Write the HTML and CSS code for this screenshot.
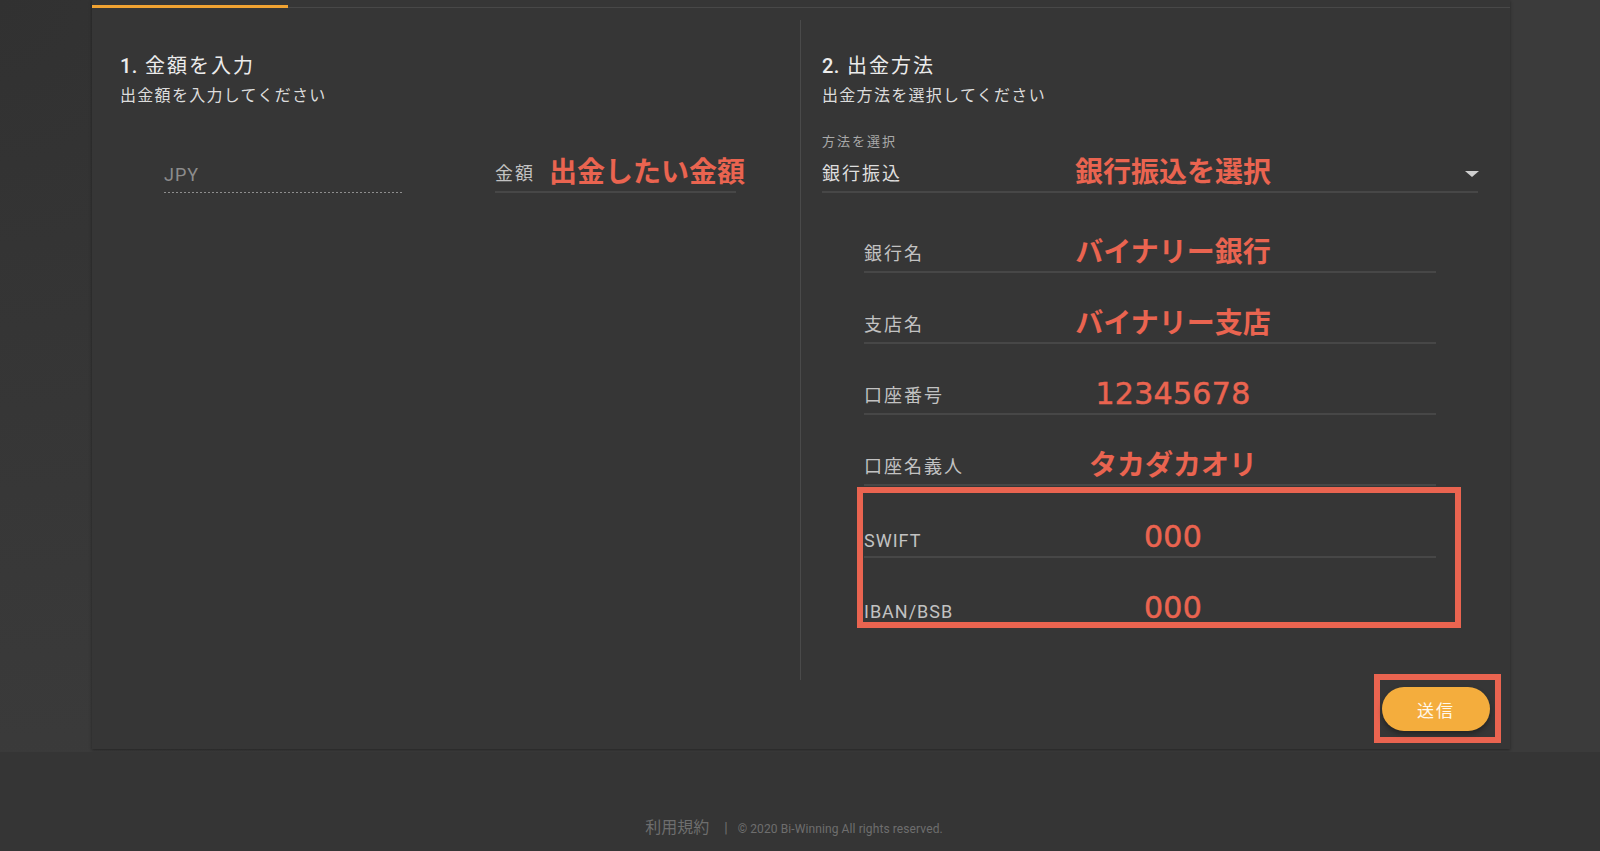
FILE: index.html
```html
<!DOCTYPE html>
<html lang="ja">
<head>
<meta charset="utf-8">
<title>出金</title>
<link rel="stylesheet" href="styles.css">
</head>
<body>
<div class="page">
  <main class="main">
    <section class="card">
      <div class="tabs"><div class="tab-active"></div></div>
      <div class="columns">
        <div class="col col-left">
          <h2 class="title"><span class="title-num">1.</span> 金額を入力</h2>
          <p class="subtitle">出金額を入力してください</p>
          <div class="amount-row">
            <div class="field-row field-dotted amount-currency"><span class="placeholder">JPY</span></div>
            <div class="field-row amount-value"><span class="label">金額</span><span class="note note-inline">出金したい金額</span></div>
          </div>
        </div>
        <div class="col col-right">
          <h2 class="title"><span class="title-num">2.</span> 出金方法</h2>
          <p class="subtitle">出金方法を選択してください</p>
          <div class="select-caption">方法を選択</div>
          <div class="field-row select-row">
            <span class="label select-value">銀行振込</span>
            <span class="note">銀行振込を選択</span>
            <span class="caret"></span>
          </div>
          <div class="bank-fields">
            <div class="field-row"><span class="label">銀行名</span><span class="note">バイナリー銀行</span></div>
            <div class="field-row"><span class="label">支店名</span><span class="note">バイナリー支店</span></div>
            <div class="field-row"><span class="label">口座番号</span><span class="note note-digits">12345678</span></div>
            <div class="field-row"><span class="label">口座名義人</span><span class="note">タカダカオリ</span></div>
            <div class="highlight highlight-fields">
              <div class="field-row"><span class="label latin">SWIFT</span><span class="note note-digits">000</span></div>
              <div class="field-row field-last"><span class="label latin">IBAN/BSB</span><span class="note note-digits">000</span></div>
            </div>
          </div>
        </div>
      </div>
      <div class="actions">
        <div class="highlight highlight-button"><button class="submit" type="button">送信</button></div>
      </div>
    </section>
  </main>
  <footer class="footer">
    <span class="terms">利用規約</span><span class="sep">|</span><span class="copy">© 2020 Bi-Winning All rights reserved.</span>
  </footer>
</div>
</body>
</html>
```

FILE: styles.css
```css
* {
  box-sizing: border-box;
}

html, body {
  margin: 0;
  padding: 0;
}

body {
  width: 1600px;
  height: 851px;
  overflow: hidden;
  background: #353535;
  font-family: Roboto, "Noto Sans CJK JP", sans-serif;
  color: #e6e6e6;
}

.page {
  display: flex;
  flex-direction: column;
  height: 851px;
}

.main {
  height: 752px;
  flex: none;
  padding-left: 92px;
  background: radial-gradient(circle at 0 0, #313131 0, #3b3b3b 820px);
}

.card {
  width: 1418px;
  height: 749px;
  background: #363636;
  box-shadow: 0 1px 3px rgba(0, 0, 0, 0.4);
  display: flex;
  flex-direction: column;
}

.tabs {
  height: 8px;
  flex: none;
  display: flex;
  align-items: flex-end;
  box-shadow: inset 0 -1px 0 #484848;
}

.tab-active {
  width: 196px;
  height: 3px;
  background: #f1a332;
}

.columns {
  display: flex;
  margin-top: 12px;
  height: 660px;
  flex: none;
}

.col-left {
  width: 708px;
  padding-left: 28px;
}

.col-right {
  flex: 1;
  border-left: 1px solid #4a4a4a;
  padding-left: 21px;
  padding-right: 32px;
}

.title {
  margin: 32px 0 0;
  font-size: 20px;
  line-height: 28px;
  font-weight: 400;
  letter-spacing: 2px;
  color: #ececec;
}

.title-num {
  font-weight: 500;
  letter-spacing: 0.5px;
}

.subtitle {
  margin: 4px 0 0;
  font-size: 16px;
  line-height: 24px;
  letter-spacing: 1.3px;
  color: #dcdcdc;
}

/* generic field row */
.field-row {
  display: flex;
  align-items: flex-end;
  height: 35px;
  padding-bottom: 5px;
  border-bottom: 2px solid #474747;
}

.label {
  flex: none;
  font-size: 18px;
  line-height: 24px;
  letter-spacing: 2px;
  color: #c2c2c2;
  white-space: nowrap;
}

.label.latin {
  letter-spacing: 1px;
  margin-bottom: -2px;
}

.note {
  flex: none;
  width: 420px;
  text-align: center;
  font-family: "Noto Sans CJK JP", sans-serif;
  font-weight: 700;
  font-size: 28px;
  line-height: 28px;
  color: #ea6450;
  white-space: nowrap;
  margin-bottom: 2px;
}

.note-digits {
  font-family: "DejaVu Sans", sans-serif;
  font-weight: 400;
  font-size: 30px;
  letter-spacing: 0.3px;
  -webkit-text-stroke: 0.5px #ea6450;
  margin-bottom: 0;
}

/* left column */
.amount-row {
  display: flex;
  margin-top: 50px;
  margin-left: 44px;
}

.amount-currency {
  width: 240px;
}

.field-dotted {
  height: 35px;
  padding-bottom: 6px;
  border-bottom: none;
  background: repeating-linear-gradient(90deg, #8e8e8e 0 2px, transparent 2px 4px) left bottom / 100% 1px no-repeat;
}

.placeholder {
  font-size: 18px;
  line-height: 24px;
  letter-spacing: 1px;
  color: #8c8c8c;
}

.amount-value {
  width: 241px;
  margin-left: 91px;
}

.note-inline {
  width: auto;
  margin-left: 14px;
  text-align: left;
}

/* right column */
.select-caption {
  margin-top: 24px;
  font-size: 13px;
  line-height: 20px;
  letter-spacing: 2px;
  color: #a9a9a9;
}

.select-row {
  margin-top: 6px;
}

.select-value {
  width: 141px;
  color: #dedede;
}

.caret {
  margin-left: auto;
  margin-right: -1px;
  align-self: flex-start;
  margin-top: 13px;
  width: 0;
  height: 0;
  border-left: 7px solid transparent;
  border-right: 7px solid transparent;
  border-top: 6px solid #cfcfcf;
}

.bank-fields {
  margin: 45px 42px 0 42px;
}

.bank-fields .label {
  width: 99px;
}

.bank-fields > .field-row + .field-row,
.highlight-fields > .field-row + .field-row {
  margin-top: 36px;
}

.highlight {
  border: 6px solid #ea6450;
}

.highlight-fields {
  margin: 1px -25px 0 -7px;
  padding: 30px 19px 0 1px;
}

.field-last {
  height: 28px;
  padding-bottom: 0;
  border-bottom: none;
}

/* actions */
.actions {
  display: flex;
  justify-content: flex-end;
  margin-top: -6px;
  padding-right: 9px;
}

.highlight-button {
  padding: 7px 5px 6px 2px;
}

.submit {
  display: flex;
  align-items: center;
  justify-content: center;
  width: 108px;
  height: 44px;
  border: none;
  border-radius: 22px;
  background: #f4ad3d;
  color: #fff8ec;
  font-family: Roboto, "Noto Sans CJK JP", sans-serif;
  font-size: 17px;
  letter-spacing: 2px;
  box-shadow: 0 3px 5px rgba(0, 0, 0, 0.35);
  padding: 0;
}

/* footer */
.footer {
  flex: 1;
  background: #353535;
  padding-top: 66px;
  padding-right: 12px;
  display: flex;
  justify-content: center;
  align-items: baseline;
  line-height: 20px;
  color: #6e6e6e;
}

.terms {
  font-size: 16px;
}

.sep {
  font-size: 14px;
  margin: 0 10px 0 15px;
}

.copy {
  font-size: 12px;
  letter-spacing: 0.1px;
}
```
